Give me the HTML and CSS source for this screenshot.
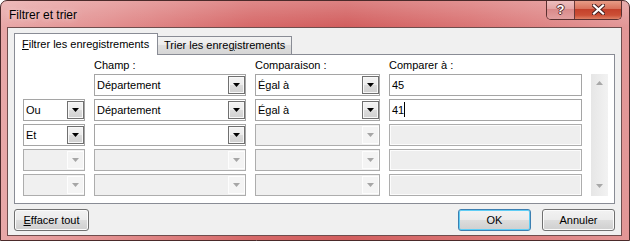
FILE: index.html
```html
<!DOCTYPE html>
<html lang="fr">
<head>
    <meta charset="UTF-8">
    <meta name="viewport" content="width=device-width, initial-scale=1.0">
    <title>Filtrer et trier</title>
    <link rel="stylesheet" href="styles.css">
</head>
<body>

    <div class="window">
        <div class="titlebar">
            <span class="title">Filtrer et trier</span>
            <div class="caption-buttons">
                <div class="cap-btn cap-help">?</div>
                <div class="cap-btn cap-close">
                    <svg width="13" height="11" viewBox="0 0 13 11">
                        <path d="M2 1.5 L11 9.5 M11 1.5 L2 9.5" stroke="#4a2020" stroke-width="4.2" stroke-linecap="square" fill="none"/>
                        <path d="M2 1.5 L11 9.5 M11 1.5 L2 9.5" stroke="#fff" stroke-width="2.2" stroke-linecap="square" fill="none"/>
                    </svg>
                </div>
            </div>
        </div>

        <div class="client">
            <div class="tabs">
                <div class="tab tab-active"><u>F</u>iltrer les enregistrements</div>
                <div class="tab tab-inactive">Trier les enre<u>g</u>istrements</div>
            </div>

            <div class="panel">
                <div class="grid">
                    <div></div>
                    <div class="head">Champ :</div>
                    <div class="head">Comparaison :</div>
                    <div class="head">Comparer à :</div>
                    <div></div>
                    <div class="scrollbar">
                        <span class="scroll-arrow up"></span>
                        <span class="scroll-arrow down"></span>
                    </div>

                    <!-- row 1 -->
                    <div></div>
                    <div class="combo"><span class="value">Département</span><span class="drop"></span></div>
                    <div class="combo"><span class="value">Égal à</span><span class="drop"></span></div>
                    <div class="textbox">45</div>

                    <!-- row 2 -->
                    <div class="combo"><span class="value">Ou</span><span class="drop"></span></div>
                    <div class="combo"><span class="value">Département</span><span class="drop"></span></div>
                    <div class="combo"><span class="value">Égal à</span><span class="drop"></span></div>
                    <div class="textbox">41<span class="caret"></span></div>

                    <!-- row 3 -->
                    <div class="combo"><span class="value">Et</span><span class="drop"></span></div>
                    <div class="combo"><span class="value"></span><span class="drop"></span></div>
                    <div class="combo disabled"><span class="value"></span><span class="drop"></span></div>
                    <div class="textbox disabled"></div>

                    <!-- row 4 -->
                    <div class="combo disabled"><span class="value"></span><span class="drop"></span></div>
                    <div class="combo disabled"><span class="value"></span><span class="drop"></span></div>
                    <div class="combo disabled"><span class="value"></span><span class="drop"></span></div>
                    <div class="textbox disabled"></div>

                    <!-- row 5 -->
                    <div class="combo disabled"><span class="value"></span><span class="drop"></span></div>
                    <div class="combo disabled"><span class="value"></span><span class="drop"></span></div>
                    <div class="combo disabled"><span class="value"></span><span class="drop"></span></div>
                    <div class="textbox disabled"></div>
                </div>
            </div>

            <div class="footer">
                <div class="btn btn-clear"><u>E</u>ffacer tout</div>
                <div class="btn btn-default">OK</div>
                <div class="btn">Annuler</div>
            </div>
        </div>
    </div>

</body>
</html>
```

FILE: styles.css
```css
body {
    margin: 0;
    background: #fff;
    font-family: 'Liberation Sans', Arial, sans-serif;
    font-size: 11px;
    color: #000;
}

.window {
    width: 630px;
    height: 241px;
    box-sizing: border-box;
    border: 1px solid #4b2a2a;
    border-radius: 7px 7px 0 0;
    background:
        linear-gradient(180deg, rgba(255, 255, 255, 0.22), rgba(255, 255, 255, 0) 26px),
        linear-gradient(90deg, #e8a8a8 0%, #e28e8e 18%, #d66868 40%, #d25e5e 55%, #da7474 75%, #e39797 100%);
    display: flex;
    flex-direction: column;
    overflow: hidden;
}

/* title bar */

.titlebar {
    height: 26px;
    flex-shrink: 0;
    display: flex;
    justify-content: space-between;
    align-items: flex-start;
}

.title {
    font-size: 12px;
    line-height: 14px;
    padding: 7px 0 0 8px;
    text-shadow: 0 0 6px rgba(255, 235, 235, 0.9);
}

.caption-buttons {
    display: flex;
    margin-right: 7px;
    margin-top: -1px;
    border: 1px solid #5a3030;
    border-top: none;
    border-radius: 0 0 5px 5px;
    overflow: hidden;
}

.cap-btn {
    height: 19px;
    display: flex;
    align-items: center;
    justify-content: center;
}

.cap-help {
    width: 27px;
    border-right: 1px solid #6a3a3a;
    background: linear-gradient(180deg, #efc2c2 0%, #e4a6a6 45%, #d98a8a 50%, #e2a0a0 100%);
    color: #fff;
    font-weight: bold;
    font-size: 13px;
    text-shadow: 1px 0 0 #5a2a2a, -1px 0 0 #5a2a2a, 0 1px 0 #5a2a2a, 0 -1px 0 #5a2a2a;
}

.cap-close {
    width: 46px;
    background: linear-gradient(180deg, #e9a18c 0%, #d9725c 45%, #c4412b 50%, #cc4f36 80%, #df8166 100%);
}

/* client area */

.client {
    flex: 1;
    margin: 0 7px 4px 6px;
    border: 1px solid #6f4d4d;
    background: #f0f0f0;
    padding: 5px 0 4px;
    display: flex;
    flex-direction: column;
}

.tabs {
    display: flex;
    align-items: flex-end;
    height: 21px;
    margin-left: 6px;
}

.tab {
    box-sizing: border-box;
    border: 1px solid #898c95;
    border-bottom: none;
    white-space: nowrap;
}

.tab-active {
    width: 144px;
    height: 22px;
    line-height: 20px;
    padding: 0 0 1px 7px;
    margin-bottom: -1px;
    background: #fff;
    position: relative;
    z-index: 1;
}

.tab-inactive {
    width: 134px;
    height: 18px;
    line-height: 17px;
    padding-left: 6px;
    border-left: none;
    background: linear-gradient(180deg, #f3f3f3 0%, #ebebeb 50%, #dedede 50%, #d6d6d6 100%);
}

.panel {
    margin: 0 6px;
    border: 1px solid #898c95;
    background: #fff;
    padding: 0 0 7px 8px;
}

.grid {
    display: grid;
    grid-template-columns: 62px 152px 125px 193px 17px;
    grid-template-rows: 16px repeat(5, 22px);
    column-gap: 9px;
    row-gap: 3px;
}

.head {
    line-height: 16px;
    padding-top: 2px;
    white-space: nowrap;
}

/* combo boxes */

.combo {
    display: flex;
    border: 1px solid #a5a5a5;
    background: #fff;
    padding: 1px 0 1px 1px;
}

.combo .value {
    flex: 1;
    line-height: 18px;
    padding-left: 1px;
    white-space: nowrap;
    overflow: hidden;
}

.combo .drop {
    width: 15px;
    border: 1px solid #707070;
    box-shadow: inset 0 0 0 1px #f8f8f8;
    background: linear-gradient(180deg, #f3f3f3 0%, #ececec 50%, #dcdcdc 50%, #d0d0d0 100%);
    display: flex;
    align-items: center;
    justify-content: center;
}

.combo .drop::after {
    content: "";
    width: 7px;
    height: 4px;
    background: #000;
    clip-path: polygon(0 0, 100% 0, 50% 100%);
}

.combo.disabled {
    border-color: #adadad;
    background: #f0f0f0;
}

.combo.disabled .drop {
    border-color: #fdfdfd;
    box-shadow: none;
    background: #f4f4f4;
}

.combo.disabled .drop::after {
    background: #a6a6a6;
}

/* text boxes */

.textbox {
    border: 1px solid #a5a5a5;
    background: #fff;
    padding-left: 2px;
    line-height: 20px;
    white-space: nowrap;
}

.textbox.disabled {
    border-color: #adadad;
    background: #eeeeee;
    box-shadow: inset 0 0 0 1px #fcfcfc;
}

.caret {
    display: inline-block;
    width: 1px;
    height: 15px;
    background: #000;
    vertical-align: -3px;
}

.scrollbar {
    grid-column: 5;
    grid-row: 2 / 7;
    background: linear-gradient(90deg, #e6e6e6, #f2f2f2);
    display: flex;
    flex-direction: column;
    justify-content: space-between;
    align-items: center;
    padding: 7px 0 8px;
}

.scroll-arrow {
    width: 7px;
    height: 4px;
    background: #a8a8a8;
}

.scroll-arrow.up {
    clip-path: polygon(50% 0, 100% 100%, 0 100%);
}

.scroll-arrow.down {
    clip-path: polygon(0 0, 100% 0, 50% 100%);
}

/* buttons */

.footer {
    display: flex;
    gap: 11px;
    margin: 5px 6px 0;
}

.btn {
    box-sizing: border-box;
    width: 73px;
    height: 22px;
    border: 1px solid #707070;
    border-radius: 3px;
    background: linear-gradient(180deg, #f2f2f2 0%, #ebebeb 50%, #dddddd 50%, #cfcfcf 100%);
    box-shadow: inset 0 0 0 1px #fbfbfb;
    text-align: center;
    line-height: 20px;
}

.btn-clear {
    width: 75px;
    margin-right: auto;
}

.btn-default {
    border-color: #3c7fb1;
    box-shadow: inset 0 0 0 1px #5fcdf5;
}
```
